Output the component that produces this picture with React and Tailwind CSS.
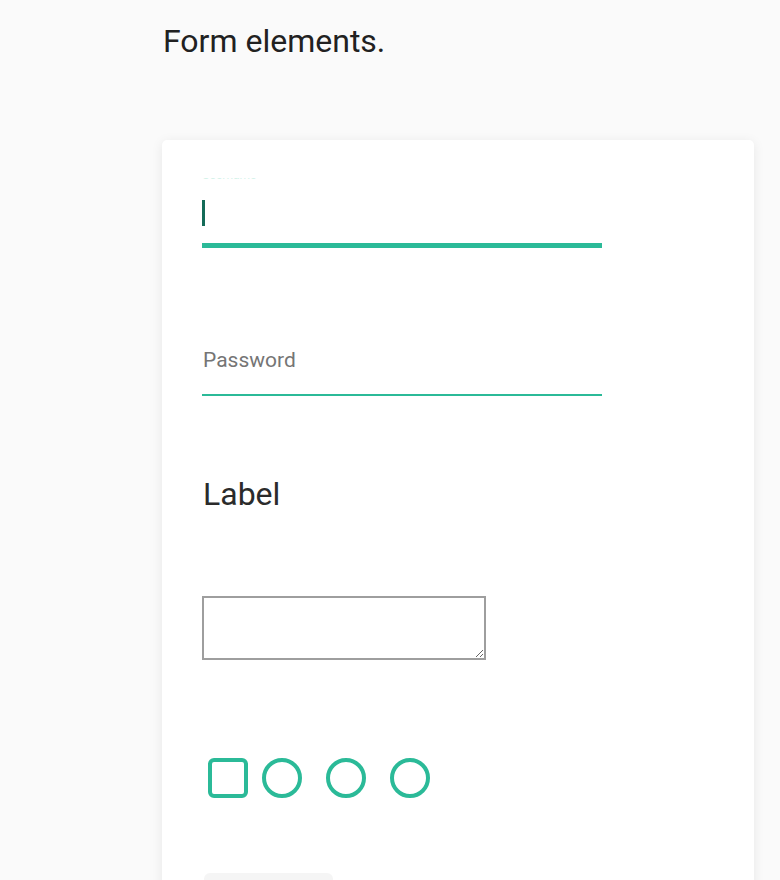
export default function App() {
  return (
    <div className="min-h-screen bg-[#fafafa] font-['Roboto',_'Liberation_Sans',_sans-serif]">
      <div className="pt-[23px] pl-[163px]">
        <h1 className="text-[32px] leading-[36px] font-normal text-[#212121]">
          Form elements.
        </h1>
      </div>

      <div className="ml-[162px] mt-[81px] w-[592px] rounded-[5px] bg-white pl-[40px] pt-[38px] pb-[40px] shadow-[0_2px_12px_rgba(0,0,0,0.08)]">
        {/* focused text field */}
        <div className="w-[400px] border-b-[5px] border-[#2bba98] pb-[17px]">
          <div className="h-[4px] overflow-hidden">
            <span className="block -translate-y-[9px] text-[12px] leading-[12px] text-[#d6f2ea]">
              Username
            </span>
          </div>
          <div className="mt-[18px] h-[26px] w-[3px] bg-[#146b58]" />
        </div>

        {/* password field */}
        <div className="mt-[100px] w-[400px] border-b-2 border-[#2bba98] pb-[22px]">
          <div className="pl-px text-[21px] leading-[24px] text-[#757575]">Password</div>
        </div>

        {/* label */}
        <div className="mt-[79px] pl-px text-[32px] leading-[38px] text-[#2b2b2b]">Label</div>

        {/* textarea */}
        <textarea className="mt-[83px] block h-[64px] w-[284px] border-2 border-[#9e9e9e] bg-white outline-none" />

        {/* checkbox + radios */}
        <div className="mt-[98px] flex items-center">
          <div className="ml-[6px] h-10 w-10 rounded-[6px] border-4 border-[#2bba98]" />
          <div className="ml-[14px] h-10 w-10 rounded-full border-4 border-[#2bba98]" />
          <div className="ml-[24px] h-10 w-10 rounded-full border-4 border-[#2bba98]" />
          <div className="ml-[24px] h-10 w-10 rounded-full border-4 border-[#2bba98]" />
        </div>

        {/* button */}
        <button className="mt-[75px] ml-[2px] block h-[36px] w-[129px] rounded-md bg-[#f5f5f5]" />
      </div>
    </div>
  );
}
